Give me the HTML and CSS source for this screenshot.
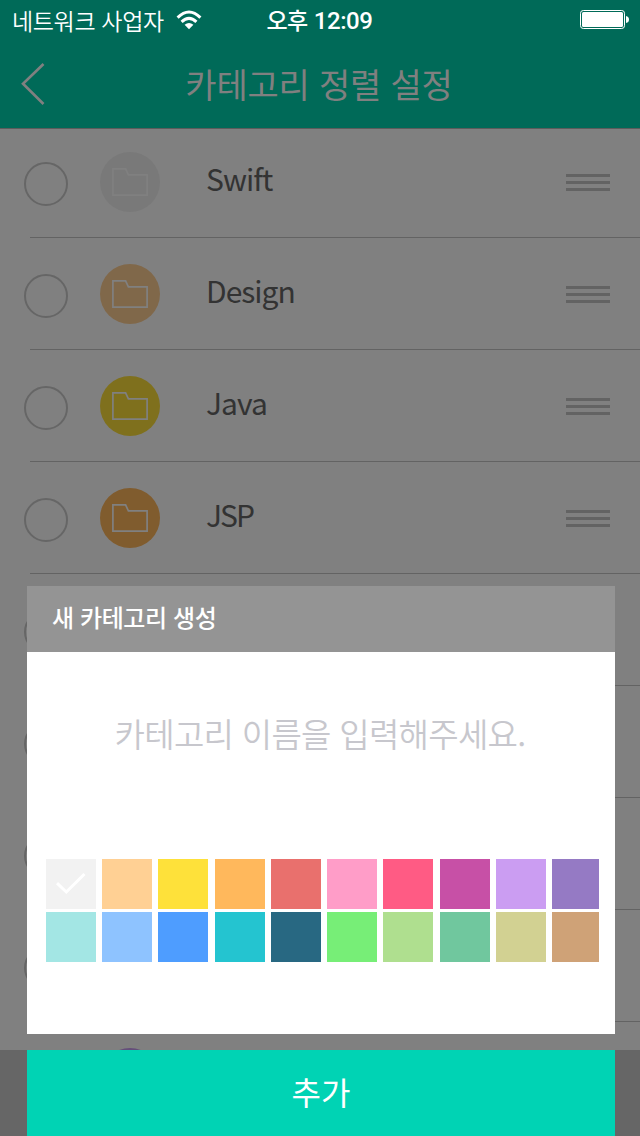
FILE: index.html
```html
<!DOCTYPE html>
<html lang="ko">
<head>
<meta charset="utf-8">
<title>카테고리 정렬 설정</title>
<link rel="stylesheet" href="styles.css">
</head>
<body>
<svg class="defs" width="0" height="0">
  <symbol id="folder" viewBox="0 0 36 28"><path d="M.9 27.1V.9H13.6L16.4 6.9H35.1V27.1Z" fill="none" stroke="currentColor" stroke-width="1.7"/></symbol>
</svg>
<div class="screen">
  <header class="top">
    <div class="status">
      <div class="carrier"><span class="carrier-name">네트워크 사업자</span>
        <svg class="wifi" width="26" height="20" viewBox="0 0 26 20"><g fill="none" stroke="#fff" stroke-width="3"><path d="M1.6 7.6Q13-3.8 24.4 7.6"/><path d="M5.6 11.8Q13 4.9 20.4 11.8"/></g><path d="M8.6 14.8Q13 11 17.4 14.8L13 19.3Z" fill="#fff"/></svg>
      </div>
      <div class="clock">오후 <span class="digits">12:09</span></div>
      <svg class="battery" width="50" height="20" viewBox="0 0 50 20"><rect x=".5" y=".5" width="44" height="18" rx="2.8" fill="none" stroke="#fff"/><rect x="2" y="2" width="41" height="15" rx="1.5" fill="#fff"/><path d="M46 6Q49 6.5 49 9.5T46 13Z" fill="#fff"/></svg>
    </div>
    <nav class="nav">
      <svg class="back" width="26" height="42" viewBox="0 0 26 42"><path d="M23.5 1L3 20.8 23.5 41" fill="none" stroke="#808080" stroke-width="2.6"/></svg>
      <h1 class="title">카테고리 정렬 설정</h1>
    </nav>
  </header>
  <ul class="list">
    <li class="row"><span class="radio"></span><span class="badge gray"><svg class="folder"><use href="#folder"/></svg></span><span class="name">Swift</span><span class="handle"><i></i><i></i><i></i></span></li>
    <li class="row"><span class="radio"></span><span class="badge peach"><svg class="folder"><use href="#folder"/></svg></span><span class="name">Design</span><span class="handle"><i></i><i></i><i></i></span></li>
    <li class="row"><span class="radio"></span><span class="badge yellow"><svg class="folder"><use href="#folder"/></svg></span><span class="name">Java</span><span class="handle"><i></i><i></i><i></i></span></li>
    <li class="row"><span class="radio"></span><span class="badge orange"><svg class="folder"><use href="#folder"/></svg></span><span class="name tight">JSP</span><span class="handle"><i></i><i></i><i></i></span></li>
    <li class="row"><span class="radio"></span></li>
    <li class="row"><span class="radio"></span></li>
    <li class="row"><span class="radio"></span></li>
    <li class="row"><span class="radio"></span></li>
    <li class="row"><span class="radio"></span><span class="badge purple"></span></li>
  </ul>
  <footer class="toolbar"></footer>
  <div class="dialog">
    <h2 class="dialog-title"><span>새 카테고리 생성</span></h2>
    <div class="panel">
      <div class="field"><span>카테고리 이름을 입력해주세요.</span></div>
      <div class="palette">
        <span class="swatch c1"><svg width="30" height="24" viewBox="0 0 30 24"><path d="M1 11.2L10.3 20 28.5 2" fill="none" stroke="#fff" stroke-width="3"/></svg></span><span class="swatch c2"></span><span class="swatch c3"></span><span class="swatch c4"></span><span class="swatch c5"></span><span class="swatch c6"></span><span class="swatch c7"></span><span class="swatch c8"></span><span class="swatch c9"></span><span class="swatch c10"></span>
        <span class="swatch c11"></span><span class="swatch c12"></span><span class="swatch c13"></span><span class="swatch c14"></span><span class="swatch c15"></span><span class="swatch c16"></span><span class="swatch c17"></span><span class="swatch c18"></span><span class="swatch c19"></span><span class="swatch c20"></span>
      </div>
    </div>
    <div class="add"><span>추가</span></div>
  </div>
</div>
</body>
</html>
```

FILE: styles.css
```css
* { box-sizing: border-box; }
body { margin: 0; font-family: "Noto Sans CJK KR", sans-serif; }
h1, h2, ul { margin: 0; padding: 0; font-weight: 400; }
.defs { position: absolute; }
.screen { position: relative; width: 640px; height: 1136px; overflow: hidden; background: #808080; display: flex; flex-direction: column; }

.top { height: 129px; flex: none; background: #006a58; border-bottom: 1px solid #5c5c5c; }
.status { height: 40px; display: grid; grid-template-columns: 1fr auto 1fr; align-items: center; padding: 0 10px 0 12px; color: #fff; line-height: 38px; }
.carrier { display: flex; align-items: center; gap: 12px; font-size: 23px; font-weight: 350; white-space: nowrap; }
.carrier-name { letter-spacing: -.35px; }
.clock { font-size: 23px; font-weight: 500; letter-spacing: -.5px; margin-right: 3px; }
.digits { font-family: Roboto, sans-serif; font-size: 24px; letter-spacing: -.4px; }
.battery { justify-self: end; }
.nav { height: 88px; display: grid; grid-template-columns: 60px 1fr 60px; align-items: center; padding-left: 20px; padding-right: 22px; }
.title { color: #808080; font-size: 34px; line-height: 86px; font-weight: 400; text-align: center; white-space: nowrap; letter-spacing: -.2px; }

.list { height: 921px; flex: none; overflow: hidden; list-style: none; padding-left: 24px; }
.row { height: 112px; display: flex; align-items: flex-start; padding-top: 26px; background: linear-gradient(#636363, #636363) 6px 100% / 100% 1px no-repeat; }
.row:first-child { height: 109px; padding-top: 23px; }
.radio { flex: none; width: 44px; height: 44px; margin-top: 10px; border: 2px solid #666; border-radius: 50%; }
.badge { flex: none; width: 60px; height: 60px; margin-left: 32px; border-radius: 50%; display: flex; align-items: center; justify-content: center; color: #808080; }
.folder { width: 36px; height: 28px; }
.gray { background: #797979; }
.gray .folder { color: #808080; }
.peach { background: #80684a; }
.yellow { background: #7f701d; }
.orange { background: #805c2e; }
.purple { background: #654e7a; }
.name { margin-left: 46px; flex: 1; font-size: 30px; line-height: 52px; color: #333; font-weight: 400; letter-spacing: -1px; }
.tight { letter-spacing: -2px; }
.handle { width: 44px; margin: 22px 30px 0 0; display: flex; flex-direction: column; gap: 4px; }
.handle i { height: 3px; background: #636363; }

.toolbar { flex: 1; background: #666; }

.dialog { position: absolute; left: 27px; top: 586px; width: 588px; height: 550px; display: flex; flex-direction: column; color: #fff; }
.dialog-title { height: 66px; background: #949494; padding-left: 25px; font-size: 24px; line-height: 62px; font-weight: 500; letter-spacing: -.4px; }
.panel { height: 382px; background: #fff; }
.field { height: 207px; line-height: 163px; font-size: 33px; font-weight: 350; color: #c7c7cd; text-align: center; white-space: nowrap; letter-spacing: -.7px; padding-right: 2px; }
.palette { display: grid; grid-template-columns: 56px 56px 57px 56px 56px 56px 57px 56px 56px 47px; grid-auto-rows: 50px; row-gap: 3px; padding-left: 19px; }
.swatch { width: 50px; height: 50px; }
.swatch:nth-child(10n) { width: 47px; }
.c1 { background: #f2f2f2; display: flex; align-items: center; justify-content: center; }
.c2 { background: #ffd094; }
.c3 { background: #fee13a; }
.c4 { background: #ffb85c; }
.c5 { background: #e9706d; }
.c6 { background: #ff9dc8; }
.c7 { background: #ff5b84; }
.c8 { background: #c750a6; }
.c9 { background: #cb9df2; }
.c10 { background: #957ac4; }
.c11 { background: #a3e6e4; }
.c12 { background: #8ec3ff; }
.c13 { background: #4e9dff; }
.c14 { background: #24c4d0; }
.c15 { background: #286882; }
.c16 { background: #77ee77; }
.c17 { background: #afdf8f; }
.c18 { background: #70c79e; }
.c19 { background: #d2d192; }
.c20 { background: #cfa277; }
.add { height: 86px; margin-top: 16px; background: #00d3b4; text-align: center; font-size: 32px; line-height: 82px; font-weight: 400; }
```
